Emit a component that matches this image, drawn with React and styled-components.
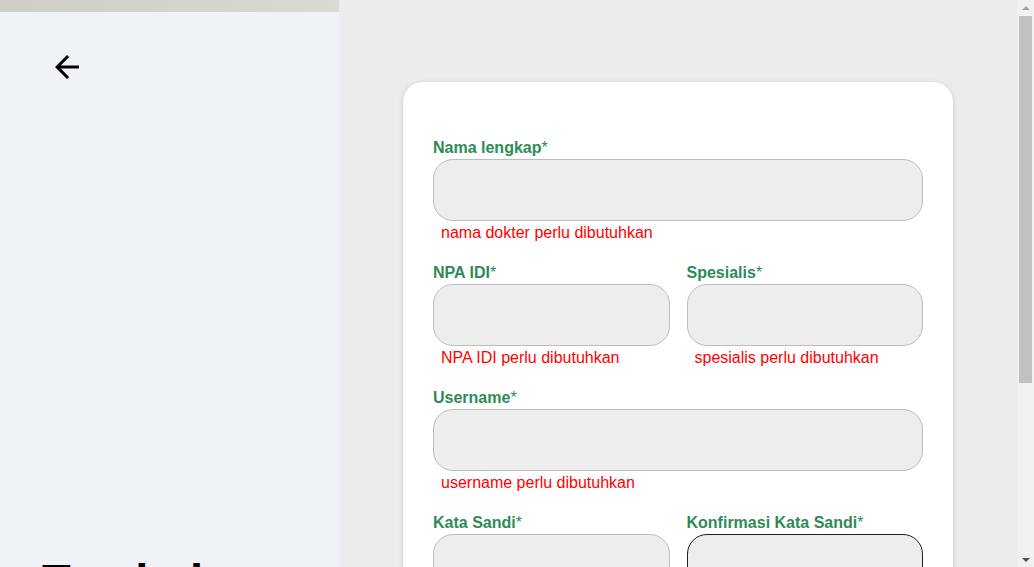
import React from 'react'
import styled, { createGlobalStyle } from 'styled-components'
import { MdArrowBack } from 'react-icons/md'

const GlobalStyle = createGlobalStyle`
    html, body {
        margin: 0;
        padding: 0;
        background: #ececec;
        font-family: "Liberation Sans", Arial, sans-serif;
    }
    * {
        box-sizing: border-box;
    }
`;

const PageContainer = styled.div`
    display: flex;
    min-height: 826px;
    margin-right: 17px;
`;

const SidePanel = styled.div`
    width: 339px;
    flex-shrink: 0;
    display: flex;
    flex-direction: column;
    background: #eff2f7;
`;

const SideBanner = styled.div`
    height: 12px;
    background: linear-gradient(90deg, #cdcec8 0%, #d3d5cf 60%, #d7dad5 100%);
`;

const SideContent = styled.div`
    display: flex;
    flex-direction: column;
    align-items: flex-start;
    padding: 37px 42px 0 49px;
`;

const BackButton = styled.button`
    display: flex;
    padding: 0;
    border: none;
    background: none;
    color: #000;
    cursor: pointer;
`;

const SideTitle = styled.h1`
    margin: 468px 0 0 -7px;
    width: 260px;
    color: #000;
    font-size: 47px;
    font-weight: 700;
    line-height: 55px;
`;

const SideText = styled.p`
    margin: 16px 0 0 -7px;
    color: #555;
    font-size: 16px;
    line-height: 24px;
`;

const MainPanel = styled.div`
    flex: 1;
    display: flex;
    justify-content: center;
    align-items: flex-start;
    padding: 82px 64px 36px;
    background: #ececec;
`;

const FormCard = styled.form`
    width: 550px;
    display: flex;
    flex-direction: column;
    padding: 57px 30px 30px;
    background: #fff;
    border-radius: 20px;
    box-shadow: 0 1px 5px rgba(0, 0, 0, 0.16);
`;

const FieldRow = styled.div`
    display: flex;
    gap: 17px;
    margin-bottom: 22px;
`;

const Field = styled.div`
    flex: 1;
    display: flex;
    flex-direction: column;
    min-width: 0;
`;

const Label = styled.label`
    margin-bottom: 2px;
    color: #2e8b57;
    font-size: 16px;
    font-weight: 700;
    line-height: 18px;
`;

const Star = styled.span`
    font-weight: 400;
`;

const Input = styled.div`
    height: 62px;
    background: #ededed;
    border: 1px solid ${(p) => (p.focused ? '#1e1e1e' : '#bdbdbd')};
    border-radius: 20px;
`;

const ErrorText = styled.span`
    margin-top: 3px;
    padding-left: 8px;
    color: #ff0000;
    font-size: 16px;
    line-height: 18px;
`;

const SubmitButton = styled.button`
    height: 52px;
    margin-top: 20px;
    border: none;
    border-radius: 20px;
    background: #2e8b57;
    color: #fff;
    font-family: inherit;
    font-size: 18px;
    font-weight: 700;
`;

/* window scrollbar, drawn over the right edge */
const ScrollTrack = styled.div`
    position: fixed;
    top: 0;
    right: 0;
    bottom: 0;
    width: 17px;
    display: flex;
    flex-direction: column;
    align-items: center;
    background: #f1f1f1;
`;

const ScrollArrow = styled.div`
    height: 15px;
    display: flex;
    align-items: center;
    justify-content: center;
    color: ${(p) => (p.disabled ? '#a3a3a3' : '#505050')};
`;

const ScrollThumb = styled.div`
    width: 13px;
    height: 367px;
    margin-top: 1px;
    background: #c1c1c1;
`;

const ScrollSpacer = styled.div`
    flex: 1;
`;

function Arrow({ down, disabled }) {
    return (
        <ScrollArrow disabled={disabled}>
            <svg width='8' height='4' viewBox='0 0 8 4'>
                <path d={down ? 'M0 0H8L4 4Z' : 'M4 0L8 4H0Z'} fill='currentColor' />
            </svg>
        </ScrollArrow>
    )
}

function FormField({ label, error, focused }) {
    return (
        <Field>
            <Label>{label}<Star>*</Star></Label>
            <Input focused={focused} />
            {error && <ErrorText>{error}</ErrorText>}
        </Field>
    )
}

export default function App() {
    return (
        <>
            <GlobalStyle />
            <PageContainer>
                <SidePanel>
                    <SideBanner />
                    <SideContent>
                        <BackButton type='button' aria-label='Kembali'>
                            <MdArrowBack size={36} />
                        </BackButton>
                        <SideTitle>Tambah Dokter</SideTitle>
                        <SideText>Lengkapi data dokter untuk membuat akun baru.</SideText>
                    </SideContent>
                </SidePanel>
                <MainPanel>
                    <FormCard>
                        <FieldRow>
                            <FormField label='Nama lengkap' error='nama dokter perlu dibutuhkan' />
                        </FieldRow>
                        <FieldRow>
                            <FormField label='NPA IDI' error='NPA IDI perlu dibutuhkan' />
                            <FormField label='Spesialis' error='spesialis perlu dibutuhkan' />
                        </FieldRow>
                        <FieldRow>
                            <FormField label='Username' error='username perlu dibutuhkan' />
                        </FieldRow>
                        <FieldRow>
                            <FormField label='Kata Sandi' />
                            <FormField label='Konfirmasi Kata Sandi' focused />
                        </FieldRow>
                        <SubmitButton type='button'>Simpan</SubmitButton>
                    </FormCard>
                </MainPanel>
            </PageContainer>
            <ScrollTrack>
                <Arrow disabled />
                <ScrollThumb />
                <ScrollSpacer />
                <Arrow down />
            </ScrollTrack>
        </>
    )
}
